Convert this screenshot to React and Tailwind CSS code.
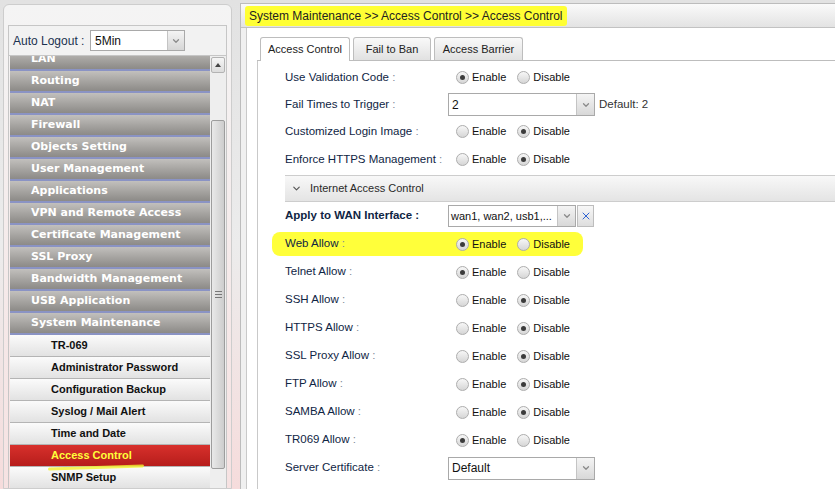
import React from "react";
import { ChevronDown, X } from "lucide-react";

const mainItems = [
  "LAN",
  "Routing",
  "NAT",
  "Firewall",
  "Objects Setting",
  "User Management",
  "Applications",
  "VPN and Remote Access",
  "Certificate Management",
  "SSL Proxy",
  "Bandwidth Management",
  "USB Application",
  "System Maintenance",
];

const subItems = [
  "TR-069",
  "Administrator Password",
  "Configuration Backup",
  "Syslog / Mail Alert",
  "Time and Date",
  "Access Control",
  "SNMP Setup",
  "Management",
];

const Radio = ({ checked }) => (
  <span className="flex h-[13px] w-[13px] items-center justify-center rounded-full border border-[#adadad] bg-linear-to-b from-[#f7f7f7] to-[#d6d6d6]">
    {checked && <span className="h-[5px] w-[5px] rounded-full bg-[#3c3c3c]" />}
  </span>
);

const RadioPair = ({ enabled }) => (
  <div className="flex items-center text-[11px] text-[#111]">
    <Radio checked={enabled} />
    <span className="ml-[3px]">Enable</span>
    <span className="ml-[11px]">
      <Radio checked={!enabled} />
    </span>
    <span className="ml-[3px]">Disable</span>
  </div>
);

const SelectBox = ({ value }) => (
  <div className="-ml-[8px] flex h-[23px] w-[147px] border border-[#a9a9a9] bg-white">
    <span className="flex flex-1 items-center overflow-hidden whitespace-nowrap pl-[3px] text-[12px] text-[#111]">
      {value}
    </span>
    <span className="flex w-[18px] items-center justify-center border-l border-[#c4c4c4] bg-linear-to-b from-[#f4f4f4] to-[#d8d8d8]">
      <ChevronDown size={10} strokeWidth={3} className="text-[#8a8a8a]" />
    </span>
  </div>
);

const Label = ({ text, bold }) => (
  <span className={`w-[171px] text-[11.5px] text-[#0f2544] ${bold ? "font-bold" : ""}`}>
    {text}
    <span className={bold ? "" : "text-[#7f8a97]"}> :</span>
  </span>
);

const Row = ({ label, h = "h-[28px]", bold, children }) => (
  <div className={`flex ${h} items-center`}>
    <Label text={label} bold={bold} />
    {children}
  </div>
);

const allowRows = [
  ["Telnet Allow", true],
  ["SSH Allow", false],
  ["HTTPS Allow", false],
  ["SSL Proxy Allow", false],
  ["FTP Allow", false],
  ["SAMBA Allow", false],
  ["TR069 Allow", true],
];

export default function App() {
  return (
    <div className="flex h-[489px] w-[835px] overflow-hidden bg-linear-to-b from-[#e2e2e2] via-[#ececec] to-[#f6dcdc] font-['Liberation_Sans',Arial,sans-serif]">
      {/* sidebar */}
      <aside className="h-full w-[232px] shrink-0 pl-[3px] pt-[4px]">
        <div className="flex h-full flex-col rounded-t-[6px] border border-[#cdcdcd] bg-linear-to-b from-[#f4f4f4] to-[#f6e2e2] px-[4px] pt-[20px]">
          <div className="flex h-[31px] shrink-0 items-center border border-[#c6c6c6] bg-[#f2f2f2] pl-[4px]">
            <span className="w-[77px] text-[12px] text-[#1a3150]">Auto Logout :</span>
            <div className="flex h-[21px] w-[95px] border border-[#a9a9a9] bg-white">
              <span className="flex flex-1 items-center pl-[4px] text-[12px] text-[#111]">5Min</span>
              <span className="flex w-[17px] items-center justify-center border-l border-[#c4c4c4] bg-linear-to-b from-[#f4f4f4] to-[#d6d6d6]">
                <ChevronDown size={10} strokeWidth={3} className="text-[#8a8a8a]" />
              </span>
            </div>
          </div>

          <div className="flex min-h-0 flex-1 border-x border-[#c6c6c6] pl-[1px]">
            <div className="w-[200px] overflow-hidden">
              <div className="-mt-[7px]">
                {mainItems.map((item) => (
                  <div
                    key={item}
                    className="flex h-[22px] items-center border-b-2 border-[#8a93c4] bg-linear-to-b from-[#c2c0bd] to-[#8c8a87] pl-[21px] font-['DejaVu_Sans',Verdana,sans-serif] text-[11px] font-bold text-white"
                  >
                    {item}
                  </div>
                ))}
                {subItems.map((item) => {
                  const active = item === "Access Control";
                  return (
                    <div
                      key={item}
                      className={`relative flex h-[22px] items-center border-b border-[#b4b4b4] pl-[41px] text-[11px] font-bold ${
                        active
                          ? "z-10 bg-linear-to-b from-[#d8302c] to-[#b61d1b] text-[#ffff3a]"
                          : "bg-linear-to-b from-[#fbfbfb] to-[#e2e2e2] text-[#111]"
                      }`}
                    >
                      {item}
                      {active && (
                        <span className="absolute bottom-[-3px] left-[38px] h-[3px] w-[96px] -rotate-2 rounded-full bg-[#f4f430]/80" />
                      )}
                    </div>
                  );
                })}
              </div>
            </div>

            {/* scrollbar */}
            <div className="flex w-[16px] flex-col bg-[#eeeeee] px-[1px] pt-[1px]">
              <div className="flex h-[16px] items-center justify-center rounded-[2px] border border-[#b3b3b3] bg-linear-to-b from-[#f6f6f6] to-[#dcdcdc]">
                <span className="h-0 w-0 border-x-[3px] border-b-[4px] border-x-transparent border-b-[#444]" />
              </div>
              <div className="mt-[47px] flex h-[349px] items-center justify-center rounded-[2px] border border-[#9d9d9d] bg-linear-to-r from-[#e9e9e9] to-[#cdcdcd]">
                <span className="flex flex-col gap-[2px]">
                  <span className="h-px w-[7px] bg-[#777]" />
                  <span className="h-px w-[7px] bg-[#777]" />
                  <span className="h-px w-[7px] bg-[#777]" />
                </span>
              </div>
            </div>
          </div>
        </div>
      </aside>

      {/* main panel */}
      <main className="ml-[8px] mt-[3px] flex min-w-0 flex-1 flex-col border-l border-t border-[#bcbcbc] bg-[#f0f0f0]">
        <div className="flex h-[24px] shrink-0 items-center border-b border-[#c2c2c2] bg-linear-to-b from-[#fafafa] to-[#e3e3e3] pl-[4px]">
          <span className="flex h-[20px] items-center rounded-[3px] bg-[#ffff34] px-[4px] text-[12px] text-[#222]">
            System Maintenance &gt;&gt; Access Control &gt;&gt; Access Control
          </span>
        </div>

        <div className="flex-1 pl-[5px]">
          <div className="h-full border-l border-[#c9c9c9] bg-white pl-[10px] pt-[9px]">
            <div className="flex h-[24px] items-end gap-[3px] border-b border-[#bdbdbd] pl-[3px]">
              <div className="relative top-px flex h-[24px] w-[90px] items-center justify-center rounded-t-[3px] border border-b-0 border-[#bdbdbd] bg-white text-[11px] text-[#222]">
                Access Control
              </div>
              <div className="flex h-[23px] w-[78px] items-center justify-center rounded-t-[3px] border border-b-0 border-[#bdbdbd] bg-linear-to-b from-[#f9f9f9] to-[#e1e1e1] text-[11px] text-[#222]">
                Fail to Ban
              </div>
              <div className="flex h-[23px] w-[89px] items-center justify-center rounded-t-[3px] border border-b-0 border-[#bdbdbd] bg-linear-to-b from-[#f9f9f9] to-[#e1e1e1] text-[11px] text-[#222]">
                Access Barrier
              </div>
            </div>

            <div className="h-full border-l border-[#c9c9c9] pl-[27px] pt-[3px]">
              <Row label="Use Validation Code" h="h-[27px]">
                <RadioPair enabled />
              </Row>
              <Row label="Fail Times to Trigger" h="h-[27px]">
                <SelectBox value="2" />
                <span className="ml-[4px] text-[11.5px] text-[#333]">Default: 2</span>
              </Row>
              <Row label="Customized Login Image" h="h-[27px]">
                <RadioPair enabled={false} />
              </Row>
              <Row label="Enforce HTTPS Management" h="h-[29px]">
                <RadioPair enabled={false} />
              </Row>

              <div className="mt-[1px] flex h-[27px] items-center border-y border-[#cdcdcd] bg-linear-to-b from-[#f8f8f8] to-[#e4e4e4] pl-[6px] text-[11px] text-[#2a2a2a]">
                <ChevronDown size={11} strokeWidth={2.5} className="text-[#555]" />
                <span className="ml-[8px]">Internet Access Control</span>
              </div>

              <Row label="Apply to WAN Interface" bold>
                <div className="-ml-[8px] flex h-[22px] w-[128px] border border-[#a9a9a9] bg-white">
                  <span className="flex flex-1 items-center overflow-hidden whitespace-nowrap pl-[2px] text-[11px] text-[#111]">
                    wan1, wan2, usb1,...
                  </span>
                  <span className="flex w-[18px] items-center justify-center border-l border-[#c4c4c4] bg-linear-to-b from-[#f4f4f4] to-[#d8d8d8]">
                    <ChevronDown size={10} strokeWidth={3} className="text-[#8a8a8a]" />
                  </span>
                </div>
                <span className="ml-[1px] flex h-[22px] w-[17px] items-center justify-center border border-[#bdbdbd] bg-linear-to-b from-[#f7f7f7] to-[#dedede]">
                  <X size={12} strokeWidth={2} className="text-[#2f63d3]" />
                </span>
              </Row>

              <div className="flex h-[28px] items-center">
                <div className="-ml-[13px] flex h-[24px] w-[311px] items-center rounded-[8px] bg-[#ffff3a] pl-[13px]">
                  <Label text="Web Allow" />
                  <RadioPair enabled />
                </div>
              </div>

              {allowRows.map(([label, enabled]) => (
                <Row key={label} label={label}>
                  <RadioPair enabled={enabled} />
                </Row>
              ))}

              <Row label="Server Certificate">
                <SelectBox value="Default" />
              </Row>
            </div>
          </div>
        </div>
      </main>
    </div>
  );
}
